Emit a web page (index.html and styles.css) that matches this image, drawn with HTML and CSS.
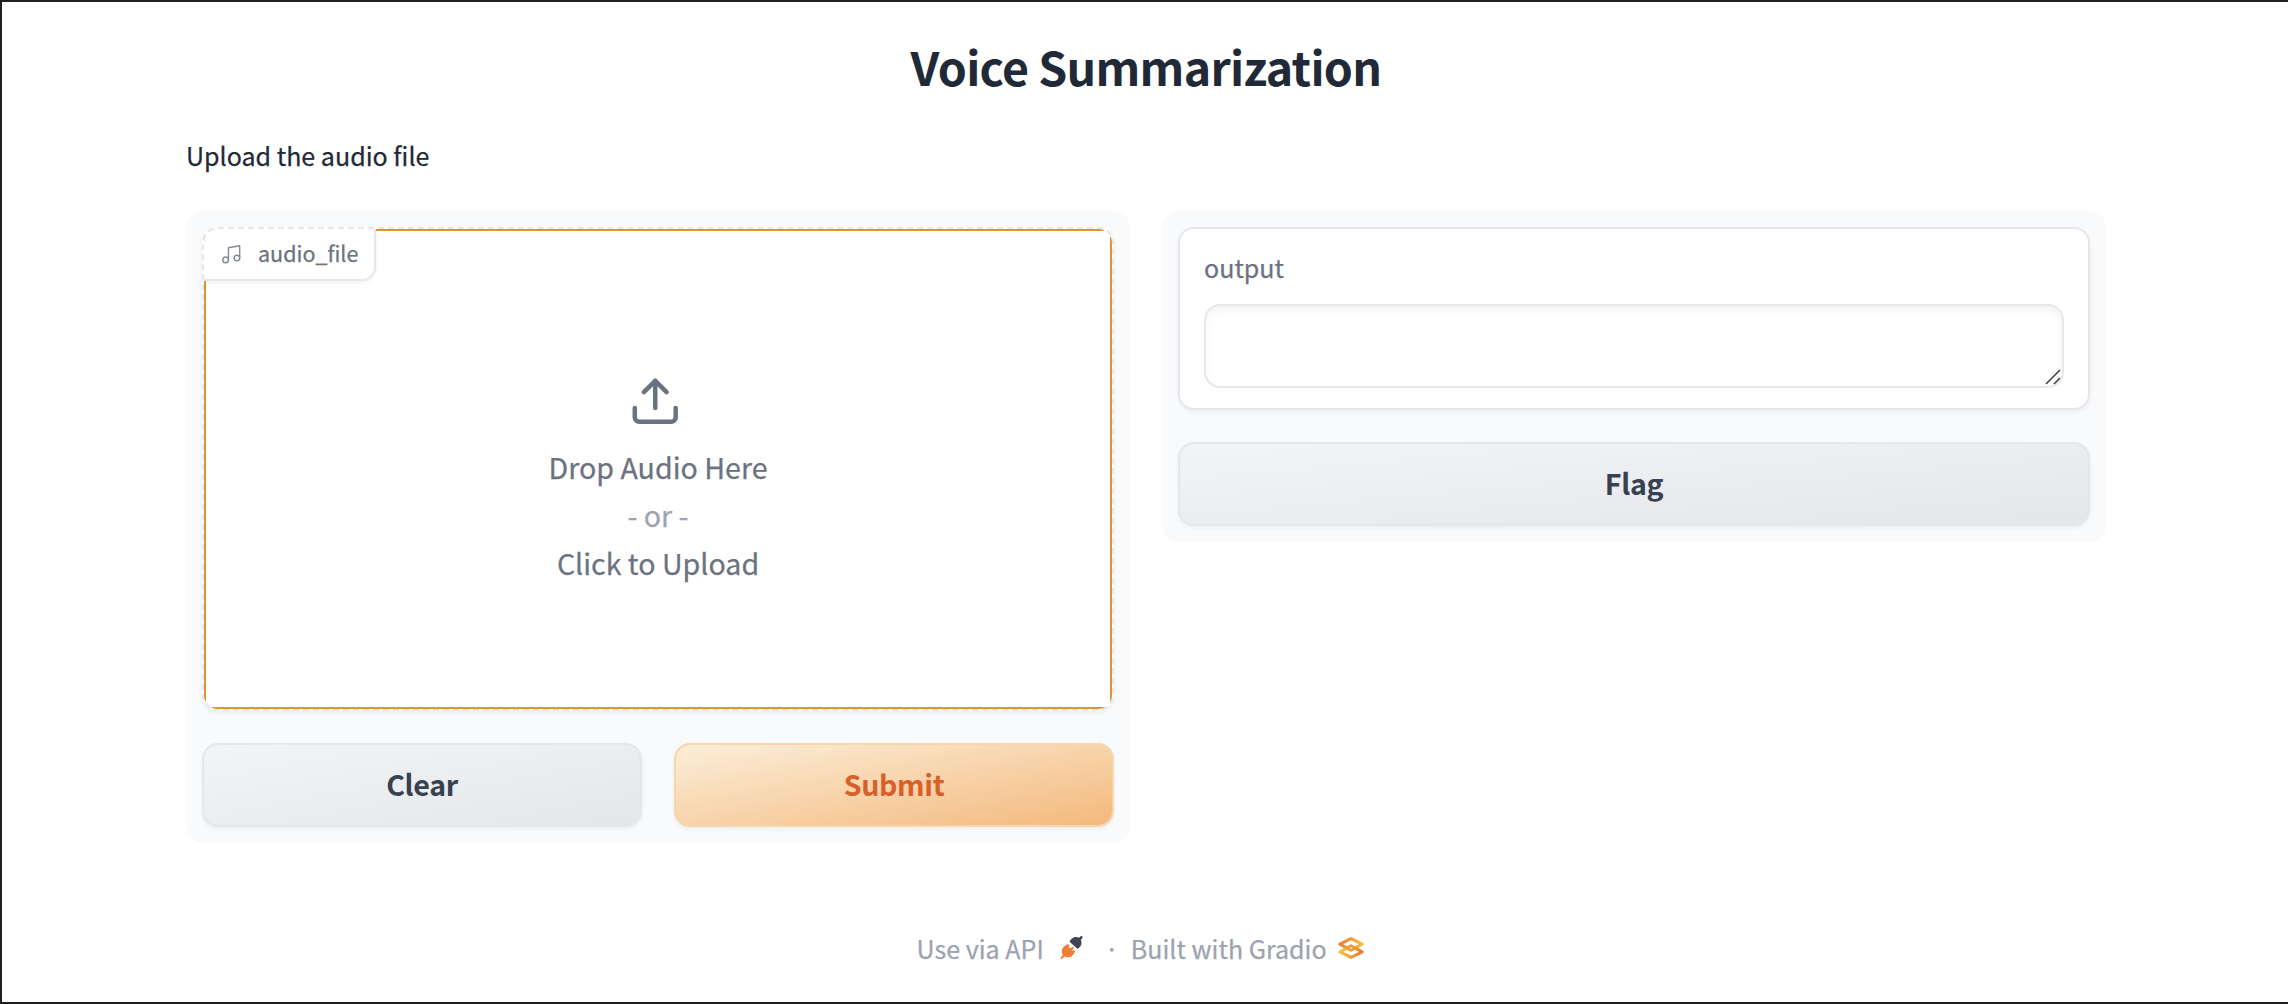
FILE: index.html
```html
<!DOCTYPE html>
<html lang="en">
<head>
<meta charset="utf-8">
<title>Voice Summarization</title>
<link rel="stylesheet" href="styles.css">
</head>
<body>
<main class="container">
  <h1 class="title">Voice Summarization</h1>
  <p class="description">Upload the audio file</p>
  <div class="columns">
    <section class="panel">
      <div class="block upload">
        <div class="drop-zone">
          <svg class="upload-icon" viewBox="0 0 24 24" fill="none" stroke="currentColor" stroke-width="2" stroke-linecap="round" stroke-linejoin="round"><path d="M21 15v4a2 2 0 0 1-2 2H5a2 2 0 0 1-2-2v-4"/><polyline points="17 8 12 3 7 8"/><line x1="12" y1="3" x2="12" y2="15"/></svg>
          <span>Drop Audio Here</span>
          <span class="or">- or -</span>
          <span>Click to Upload</span>
        </div>
        <div class="block-label">
          <svg class="music-icon" viewBox="0 0 24 24" fill="none" stroke="currentColor" stroke-width="1.5" stroke-linecap="round" stroke-linejoin="round"><path d="M9 18V5l12-2v13"/><circle cx="6" cy="18" r="3"/><circle cx="18" cy="16" r="3"/></svg>
          <span>audio_file</span>
        </div>
      </div>
      <div class="buttons">
        <button class="btn secondary">Clear</button>
        <button class="btn primary">Submit</button>
      </div>
    </section>
    <section class="panel">
      <div class="block output">
        <label class="output-label" for="output">output</label>
        <div class="field">
          <textarea class="textarea" id="output"></textarea>
          <svg class="grip" viewBox="0 0 16 16" fill="none" stroke="#444" stroke-width="1.6"><path d="M1 15 15 1M9 15l6-6"/></svg>
        </div>
      </div>
      <div class="buttons">
        <button class="btn secondary flag">Flag</button>
      </div>
    </section>
  </div>
</main>
<footer class="footer">
  <span>Use via API</span>
  <svg class="plug" viewBox="0 0 24 24">
    <path fill="#ee8035" d="M5.200 9.400 7.800 8.300c.8-.3 1.500.4 1.300 1.200L8.700 11l1.600 1.500 1.700-1.600c1-.7 2.300.5 1.600 1.500L12 14.200l.5.500 1.300-.4c.9-.2 1.500.6 1.100 1.400-1 2.300-2.600 4.500-4.800 5.200-2 .6-4 .3-5.500-.5l-2.700 2.500c-.8.600-1.700-.3-1.200-1.100l2.100-2.900C.700 15.500 1.800 11.800 5.200 9.400z"/>
    <path fill="#3d4454" d="M9.600 5.700c1.600-4 5.600-5.600 9.400-4L20.700.3c1-.7 2.400.6 1.700 1.700l-1.500 1.800c1.500 3.500.2 7.300-3.500 9z"/>
  </svg>
  <span class="dot">·</span>
  <span>Built with Gradio</span>
  <svg class="gradio" viewBox="0 0 26 22">
    <defs>
      <linearGradient id="top" x1="0" x2="1"><stop offset="0" stop-color="#ec7d32"/><stop offset="1" stop-color="#f3c13f"/></linearGradient>
      <linearGradient id="bottom" x1="0" x2="1"><stop offset="0" stop-color="#f5c43d"/><stop offset="1" stop-color="#ea7a30"/></linearGradient>
    </defs>
    <path d="M8 10.300 1.900 7.200 13 1.600l11.100 5.600L17.500 10.600" fill="none" stroke="url(#top)" stroke-width="3.100" stroke-linejoin="round" stroke-linecap="round"/>
    <path d="M18 11.700l6.100 3.100L13 20.400 1.900 14.800 8.500 11.400" fill="none" stroke="url(#bottom)" stroke-width="3.100" stroke-linejoin="round" stroke-linecap="round"/>
    <path d="M8.800 11 13 8.600 17.200 11 13 13.400z" fill="none" stroke="#f09a37" stroke-width="2.600" stroke-linejoin="round"/>
  </svg>
</footer>
</body>
</html>
```
FILE: styles.css
```css
* { box-sizing: border-box; }

body {
  margin: 0;
  height: 1004px;
  border: solid #1f1f21;
  border-width: 2px 0 2px 2px;
  background: #fff;
  color: #1f2937;
  font: 25.060px "Noto Sans CJK JP", "Noto Sans", sans-serif;
  -webkit-text-stroke: .25px;
  overflow: hidden;
}

.container {
  width: 1920px;
  height: 841px;
  margin-left: 184px;
}

.title {
  margin: 0;
  padding-top: 28px;
  font-size: 46.500px;
  font-weight: 700;
  line-height: 72px;
  letter-spacing: -.700px;
  text-align: center;
  -webkit-text-stroke: 0;
}

.description {
  margin: 0;
  padding: 33px 0 36px;
  line-height: 40px;
}

.columns {
  display: grid;
  grid-template-columns: 1fr 1fr;
  align-items: start;
  gap: 32px;
}

.panel {
  display: flex;
  flex-direction: column;
  gap: 32px;
  padding: 16px;
  border-radius: 16px;
  background: #f9fafc;
}

.block {
  position: relative;
  border: 2px solid #e5e7eb;
  border-radius: 16px;
  background: #fff;
  box-shadow: 0 2px 4px rgba(0, 0, 0, .05);
  overflow: hidden;
}

.upload {
  height: 484px;
  border-style: dashed;
}

.drop-zone {
  display: flex;
  flex-direction: column;
  align-items: center;
  height: 100%;
  padding-top: 143px;
  border: 2px solid #d99731;
  color: #6b7280;
  font-size: 28.600px;
  line-height: 48px;
}

.or { color: #9ca3af; }

.upload-icon {
  width: 54.500px;
  height: 54.500px;
  margin: 0 6px 14px 0;
  flex: none;
}

.block-label {
  position: absolute;
  top: 0;
  left: 0;
  display: flex;
  align-items: center;
  gap: 15.500px;
  width: 172px;
  height: 52px;
  padding: 0 0 3px 16px;
  border: solid #e5e7eb;
  border-width: 0 2px 2px 0;
  border-bottom-right-radius: 14px;
  background: #fff;
  box-shadow: 0 2px 4px rgba(0, 0, 0, .05);
  color: #6b7280;
  font-size: 21.500px;
  line-height: 32px;
}

.music-icon {
  width: 22.500px;
  height: 22.500px;
  margin-top: 3px;
  color: #858a95;
}

.buttons {
  display: flex;
  gap: 32px;
}

.btn {
  flex: 1;
  height: 84px;
  padding: 0 0 3px;
  border: 2px solid #e5e7eb;
  border-radius: 16px;
  box-shadow: 0 2px 4px rgba(0, 0, 0, .05);
  font: 700 28.600px/48px "Noto Sans CJK JP", "Noto Sans", sans-serif;
  letter-spacing: -.350px;
  -webkit-text-stroke: 0;
}

.secondary {
  background: linear-gradient(to bottom right, #f3f4f6, #e5e6ea) padding-box, #e5e7eb;
  color: #374151;
}

.primary {
  border-color: #f8d6ab;
  background: linear-gradient(to bottom right, #fceeda, #f3b97c) padding-box, #f8d6ab;
  color: #d95f29;
}

.output {
  height: 183px;
  padding: 19px 24px;
}

.output-label {
  display: block;
  margin-bottom: 17px;
  color: #6b7280;
  line-height: 39px;
}

.field {
  position: relative;
  height: 84px;
}

.textarea {
  display: block;
  width: 100%;
  height: 84px;
  padding: 20px;
  border: 2px solid #e5e7eb;
  border-radius: 16px;
  background: #fff;
  box-shadow: inset 0 4px 8px rgba(0, 0, 0, .05);
  font: inherit;
  resize: none;
}

.grip {
  position: absolute;
  right: 3px;
  bottom: 3px;
  width: 16px;
  height: 16px;
}

.footer {
  display: flex;
  align-items: center;
  height: 40px;
  margin: 85px 0 0 914.500px;
  color: #9ca3af;
  line-height: 40px;
  white-space: pre;
}

.plug {
  width: 24px;
  height: 24px;
  margin: 0 21px 0 16px;
}

.dot {
  width: 8px;
  margin-right: 18px;
}

.gradio {
  width: 26px;
  height: 22px;
  margin-left: 11px;
}
```
